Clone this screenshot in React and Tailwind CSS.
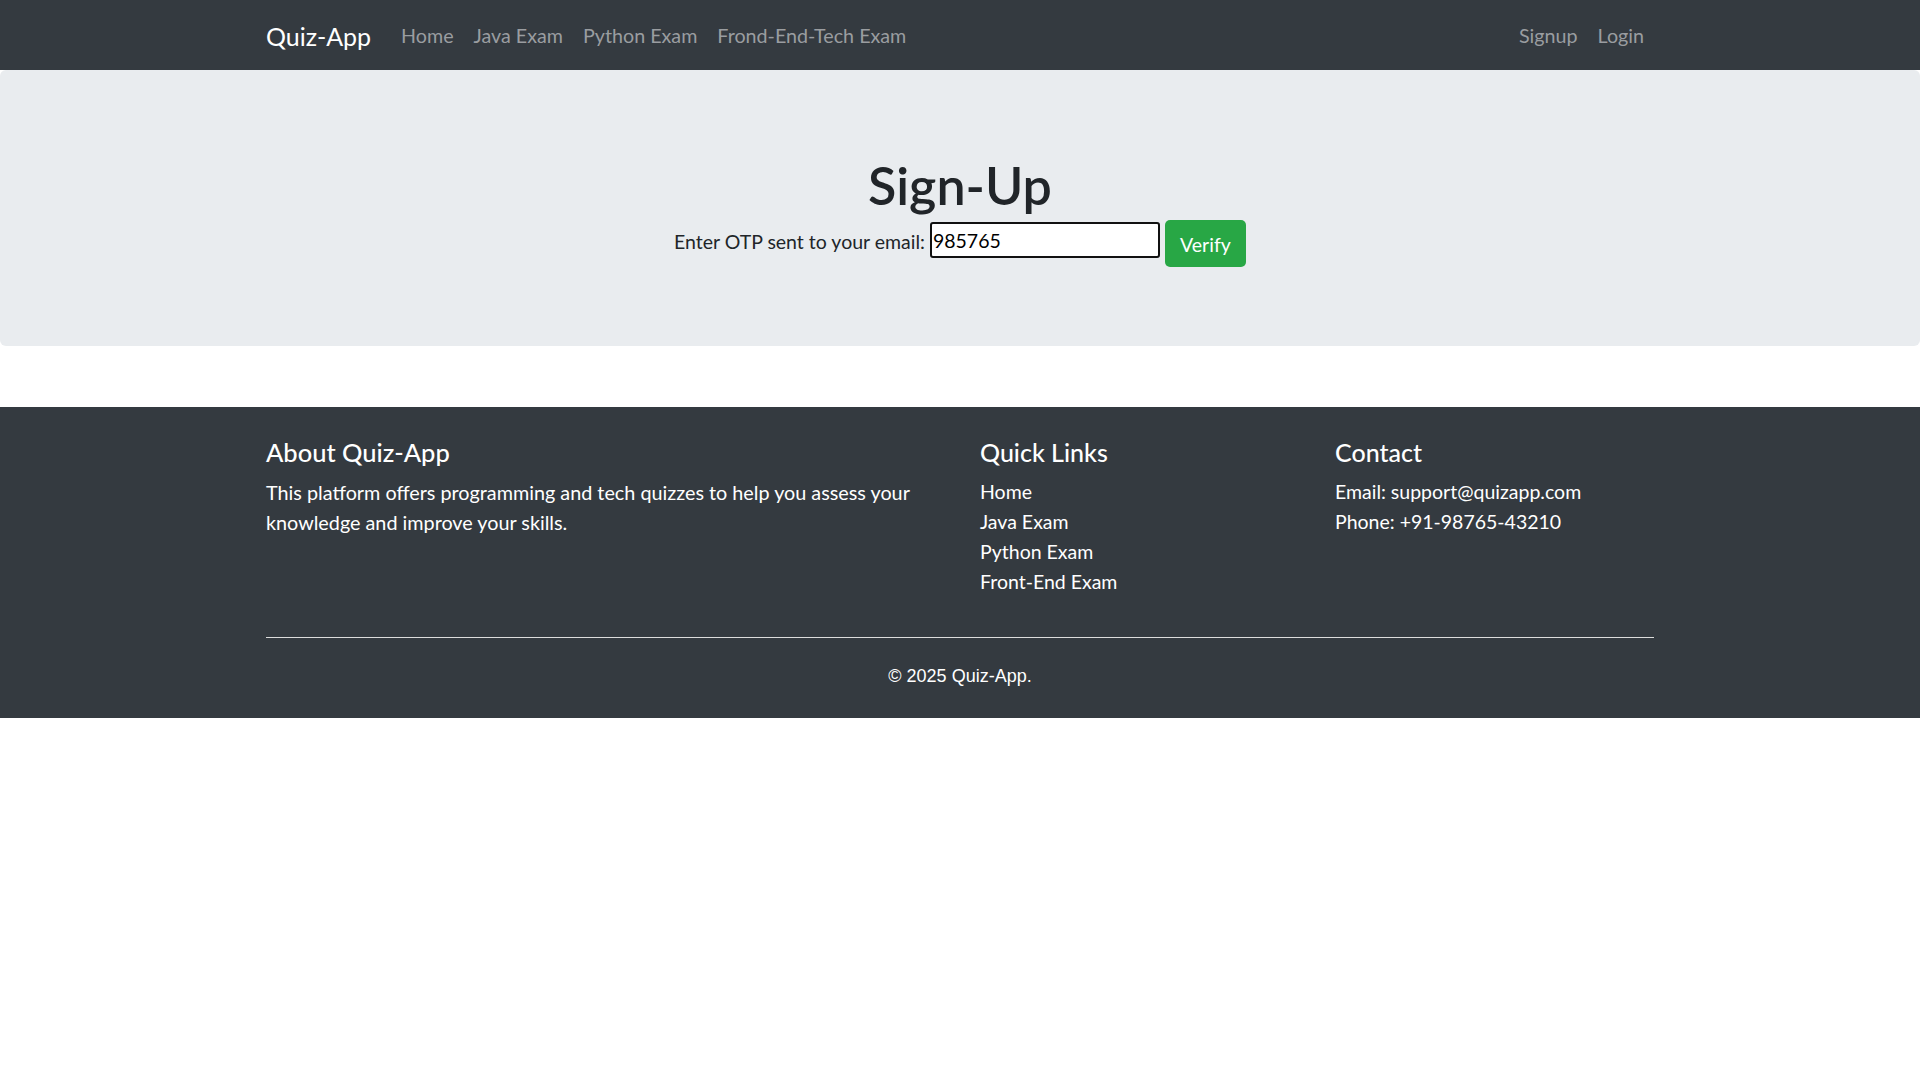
import React from "react";

const navLinks = ["Home", "Java Exam", "Python Exam", "Frond-End-Tech Exam"];
const quickLinks = ["Home", "Java Exam", "Python Exam", "Front-End Exam"];

export default function App() {
  return (
    <div className="min-h-[1080px] bg-white font-['Lato',sans-serif] text-[19.5px] leading-[30px] text-[#212529]">
      <nav className="h-[70px] bg-[#343a40]">
        <div className="mx-auto flex h-full w-[1388px] items-center justify-between pt-[2px]">
          <div className="flex items-center">
            <a className="mr-[20px] text-[25px] text-white">Quiz-App</a>
            <div className="flex">
              {navLinks.map((l) => (
                <a key={l} className="px-[10px] text-[19.7px] text-[#9a9da0]">
                  {l}
                </a>
              ))}
            </div>
          </div>
          <div className="flex">
            {["Signup", "Login"].map((l) => (
              <a key={l} className="px-[10px] text-[19.7px] text-[#9a9da0]">
                {l}
              </a>
            ))}
          </div>
        </div>
      </nav>

      <section className="rounded-[6px] bg-[#e9ecef] px-[40px] pb-[79px] pt-[80px]">
        <h1 className="text-center text-[52px] font-semibold leading-[70px] text-[#212529]">Sign-Up</h1>
        <div className="flex h-[47px] items-start justify-center">
          <label className="mr-[5px] mt-[7px] text-[19.5px] leading-[30px]">Enter OTP sent to your email:</label>
          <input
            defaultValue="985765"
            className="mt-[2px] box-border h-[36px] w-[230px] rounded-[3px] border-2 border-[#111] bg-white px-[1px] text-[19.5px] text-black outline-none"
          />
          <button className="ml-[5px] h-[47px] w-[81px] rounded-[5px] bg-[#28a745] pt-[2px] text-[19.5px] text-white">Verify</button>
        </div>
      </section>

      <footer className="mt-[61px] bg-[#343a40] pb-[27px] pt-[30px] text-white">
        <div className="mx-auto w-[1388px]">
          <div className="flex">
            <div className="w-[714px]">
              <h5 className="mb-[10px] text-[25.5px] font-medium leading-[30px]">About Quiz-App</h5>
              <p className="w-[670px] text-[19.8px]">
                This platform offers programming and tech quizzes to help you assess your knowledge and improve your skills.
              </p>
            </div>
            <div className="w-[355px]">
              <h5 className="mb-[10px] text-[25px] font-medium leading-[30px]">Quick Links</h5>
              <ul className="mb-[20px]">
                {quickLinks.map((l) => (
                  <li key={l}>
                    <a className="text-white">{l}</a>
                  </li>
                ))}
              </ul>
            </div>
            <div className="flex-1">
              <h5 className="mb-[10px] text-[25px] font-medium leading-[30px]">Contact</h5>
              <p>Email: support@quizapp.com</p>
              <p>Phone: +91-98765-43210</p>
            </div>
          </div>
          <hr className="mb-[23px] mt-[20px] border-t border-[#dcdcdc]" />
          <p className="text-center font-['Liberation_Sans',sans-serif] text-[18px]">© 2025 Quiz-App.</p>
        </div>
      </footer>
    </div>
  );
}
